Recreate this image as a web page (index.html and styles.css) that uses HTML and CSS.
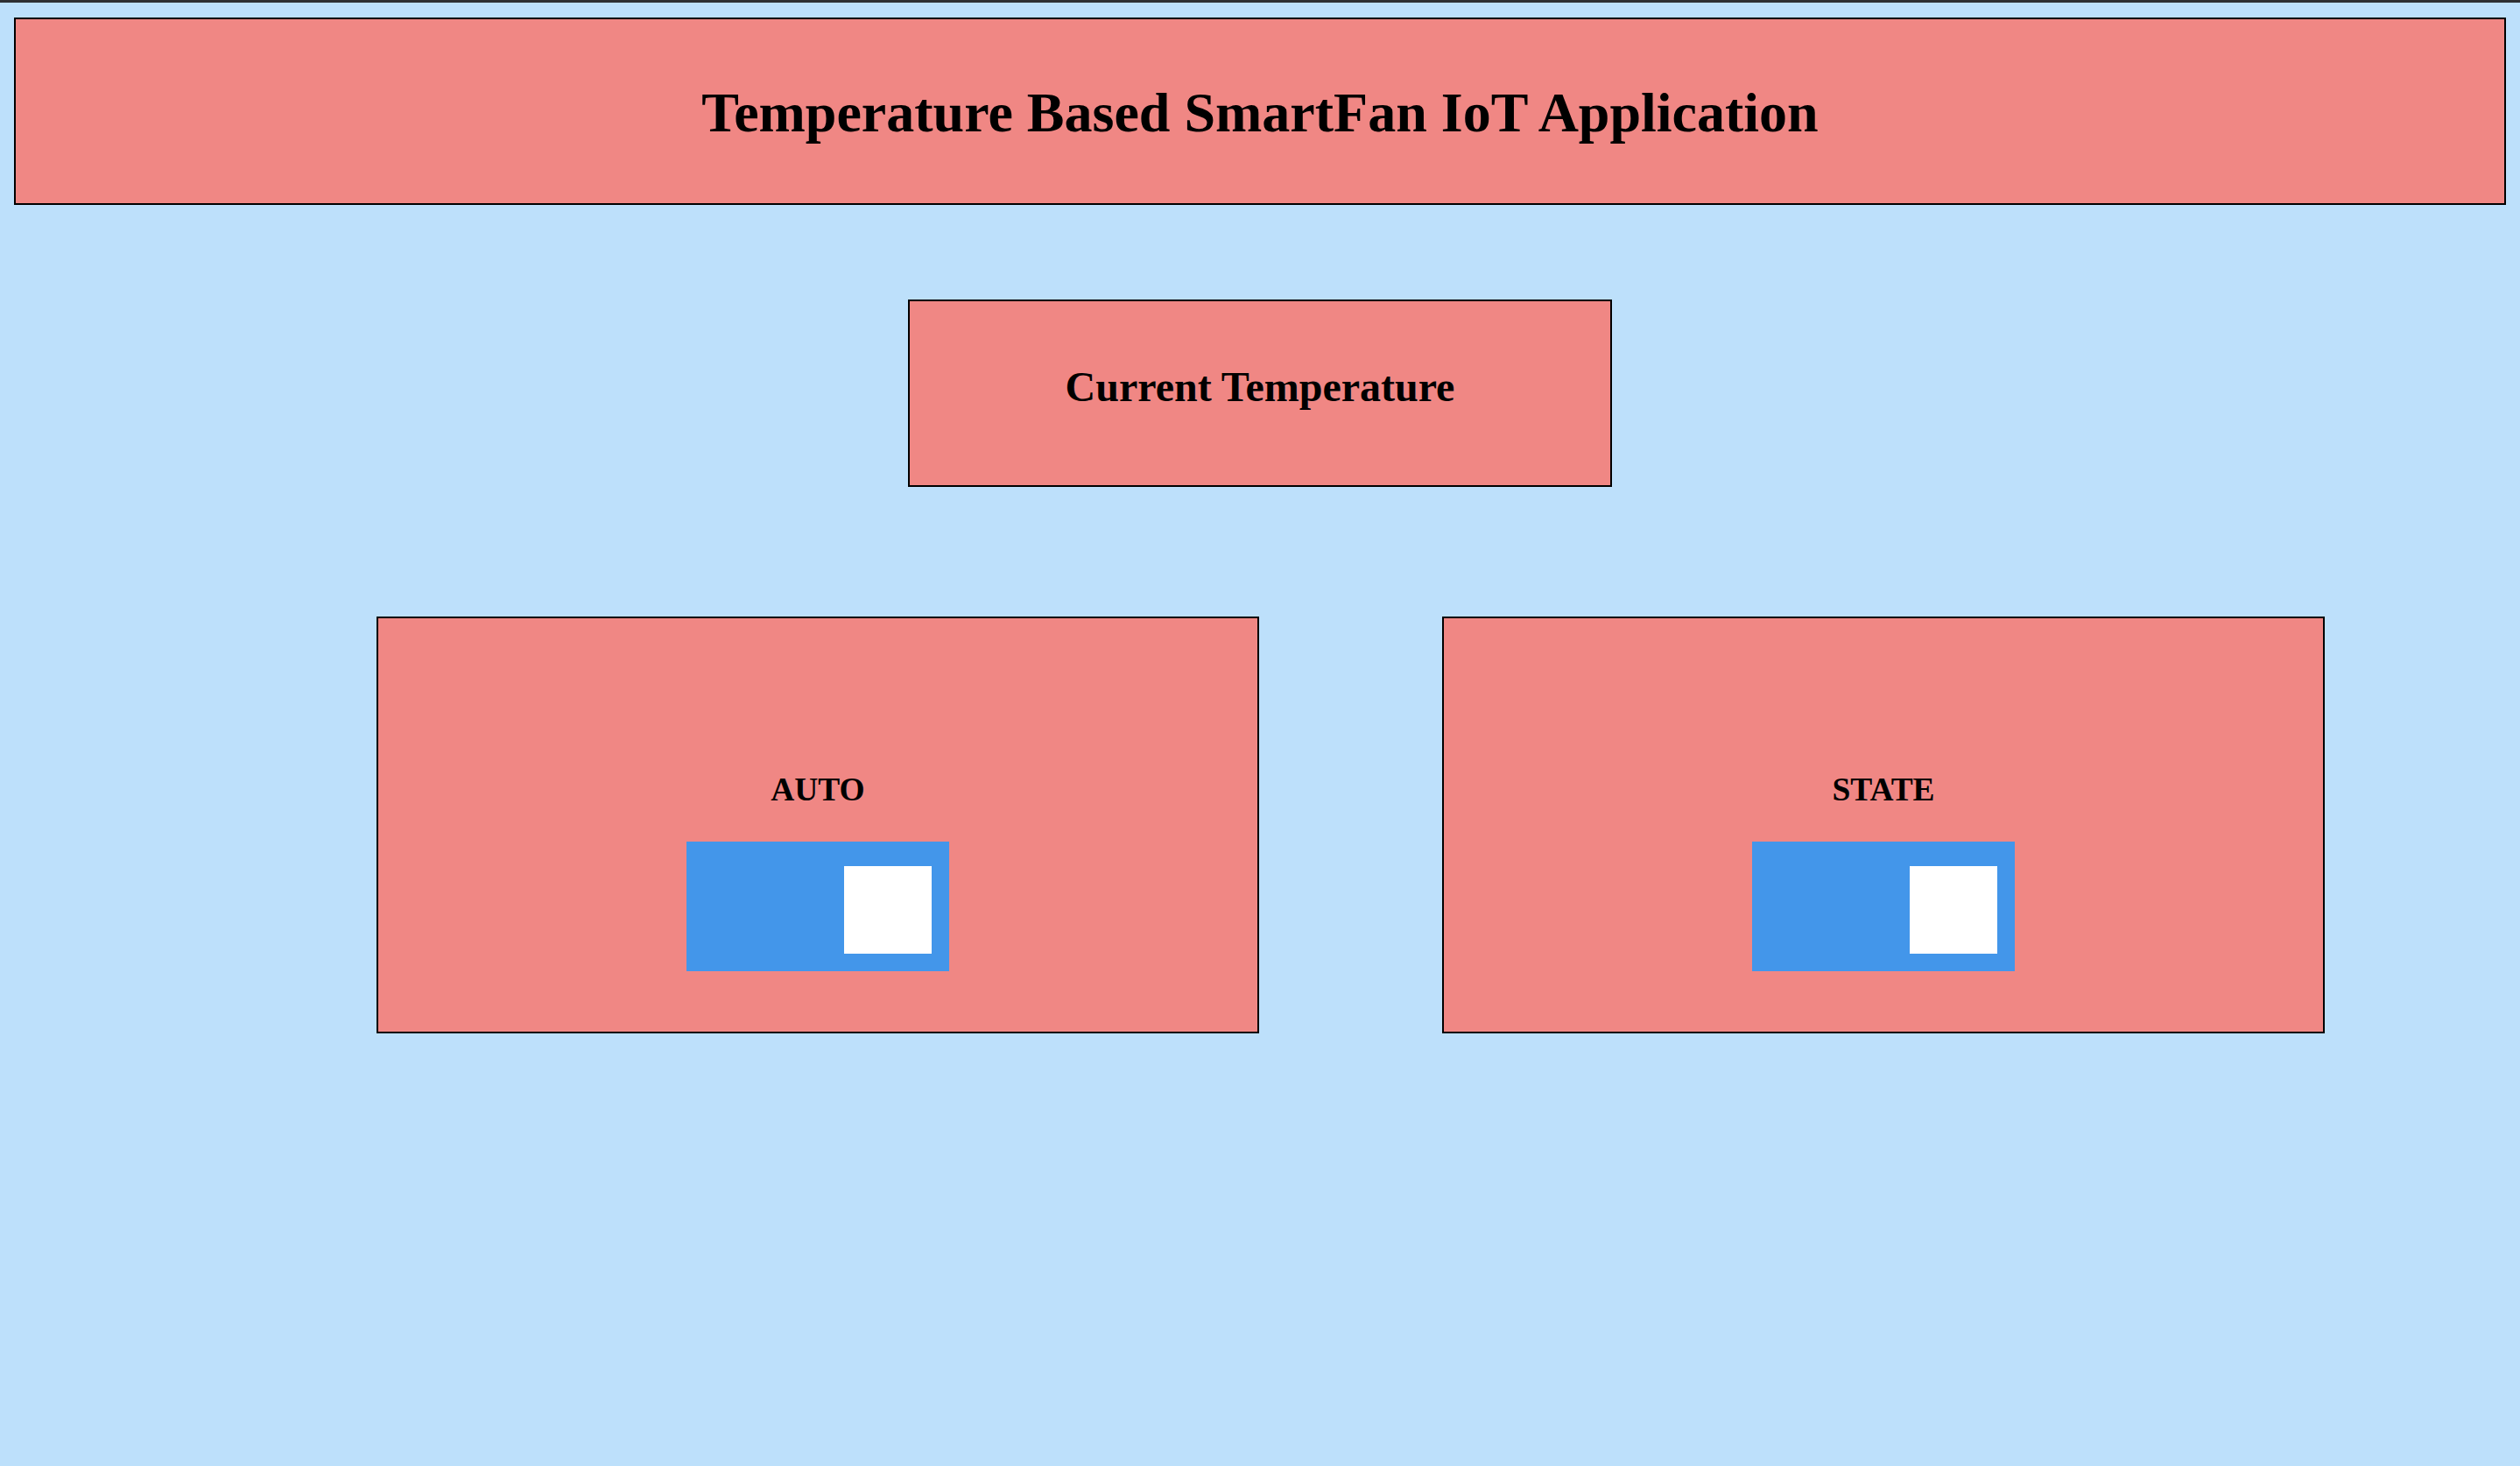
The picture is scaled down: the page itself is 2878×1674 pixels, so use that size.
FILE: index.html
```html
<!DOCTYPE html>
<html lang="en">
<head>
<meta charset="utf-8">
<title>Temperature Based SmartFan IoT Application</title>
<link rel="stylesheet" href="styles.css">
</head>
<body>
<div class="topbar"></div>
<main class="page">
  <header class="header">
    <h1 class="title">Temperature Based SmartFan IoT Application</h1>
  </header>
  <section class="temp-box">
    <h2 class="temp-title">Current Temperature</h2>
  </section>
  <section class="cards">
    <div class="card">
      <h3 class="card-title">AUTO</h3>
      <div class="toggle"><span class="knob"></span></div>
    </div>
    <div class="card">
      <h3 class="card-title">STATE</h3>
      <div class="toggle"><span class="knob"></span></div>
    </div>
  </section>
</main>
</body>
</html>
```

FILE: styles.css
```css
* {
  box-sizing: border-box;
}

html, body {
  margin: 0;
  padding: 0;
}

body {
  background: #bde0fb;
  font-family: "Liberation Serif", "Times New Roman", serif;
  color: #000;
  min-height: 1674px;
}

.topbar {
  height: 3px;
  background: #2e2f32;
}

.page {
  padding: 17px 16px 0 16px;
}

.header {
  height: 214px;
  background: #f08784;
  border: 2px solid #000;
  display: flex;
  align-items: center;
  justify-content: center;
  padding-top: 3px;
}

.title {
  margin: 0;
  font-size: 64px;
  font-weight: bold;
  line-height: 1;
}

.temp-box {
  width: 804px;
  height: 214px;
  margin: 108px auto 0 auto;
  background: #f08784;
  border: 2px solid #000;
  display: flex;
  align-items: center;
  justify-content: center;
  padding-bottom: 14px;
}

.temp-title {
  margin: 0;
  font-size: 48px;
  font-weight: bold;
  line-height: 1;
}

.cards {
  display: flex;
  gap: 209px;
  padding-left: 414px;
  margin-top: 148px;
}

.card {
  width: 1008px;
  height: 476px;
  background: #f08784;
  border: 2px solid #000;
  display: flex;
  flex-direction: column;
  align-items: center;
  padding-top: 177px;
}

.card-title {
  margin: 0;
  font-size: 37.44px;
  font-weight: bold;
  line-height: 1;
}

.toggle {
  margin-top: 41px;
  width: 300px;
  height: 148px;
  background: #4396ea;
  display: flex;
  justify-content: flex-end;
  align-items: flex-start;
  padding: 28px 20px 20px 20px;
}

.knob {
  display: block;
  width: 100px;
  height: 100px;
  background: #fff;
}
```
